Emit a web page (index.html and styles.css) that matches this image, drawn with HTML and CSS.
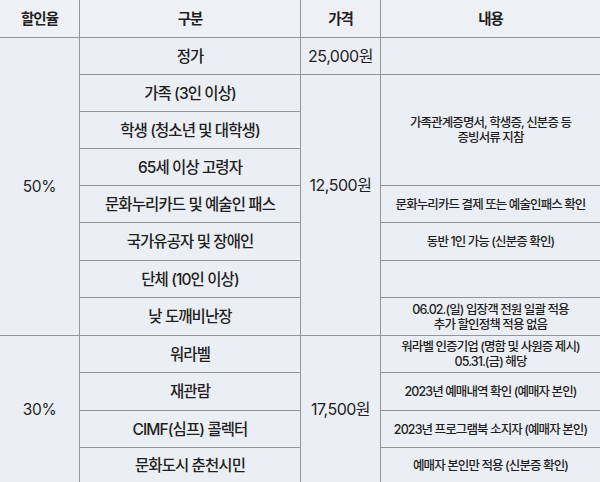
FILE: index.html
```html
<!DOCTYPE html>
<html lang="ko">
<head>
<meta charset="utf-8">
<link rel="stylesheet" href="styles.css">
</head>
<body>
<div class="table">
  <div class="cell head">할인율</div>
  <div class="cell head">구분</div>
  <div class="cell head">가격</div>
  <div class="cell head last-col">내용</div>

  <div class="cell rate span8">50%</div>
  <div class="cell item">정가</div>
  <div class="cell price">25,000원</div>
  <div class="cell note last-col"></div>

  <div class="cell item">가족 (3인 이상)</div>
  <div class="cell price span7 lift">12,500원</div>
  <div class="cell note last-col span3">가족관계증명서, 학생증, 신분증 등<br>증빙서류 지참</div>

  <div class="cell item">학생 (청소년 및 대학생)</div>
  <div class="cell item">65세 이상 고령자</div>

  <div class="cell item">문화누리카드 및 예술인 패스</div>
  <div class="cell note last-col">문화누리카드 결제 또는 예술인패스 확인</div>

  <div class="cell item">국가유공자 및 장애인</div>
  <div class="cell note last-col">동반 1인 가능 (신분증 확인)</div>

  <div class="cell item">단체 (10인 이상)</div>
  <div class="cell note last-col"></div>

  <div class="cell item">낮 도깨비난장</div>
  <div class="cell note last-col">06.02.(일) 입장객 전원 일괄 적용<br>추가 할인정책 적용 없음</div>

  <div class="cell rate span4 last-row">30%</div>
  <div class="cell item">워라벨</div>
  <div class="cell price span4 last-row">17,500원</div>
  <div class="cell note last-col">워라벨 인증기업 (명함 및 사원증 제시)<br>05.31.(금) 해당</div>

  <div class="cell item">재관람</div>
  <div class="cell note last-col">2023년 예매내역 확인 (예매자 본인)</div>

  <div class="cell item">CIMF(심프) 콜렉터</div>
  <div class="cell note last-col">2023년 프로그램북 소지자 (예매자 본인)</div>

  <div class="cell item last-row">문화도시 춘천시민</div>
  <div class="cell note last-col last-row">예매자 본인만 적용 (신분증 확인)</div>
</div>
</body>
</html>
```

FILE: styles.css
```css
html, body {
  margin: 0;
  padding: 0;
  background: #eceef5;
}

body {
  width: 600px;
  height: 482px;
  overflow: hidden;
  font-family: Inter, "Noto Sans CJK KR", sans-serif;
  color: #1f1f22;
}

.table {
  display: grid;
  grid-template-columns: 80px 221px 80px 219px;
  grid-template-rows: 38px 37px 37px 37px 37px 37px 38px 37px 38px 37px 38px 37px 34px;
  background: #eceef5;
}

.cell {
  box-sizing: border-box;
  display: flex;
  align-items: center;
  justify-content: center;
  text-align: center;
  border-right: 1px solid #95959c;
  border-bottom: 1px solid #95959c;
  font-size: 15.5px;
  font-weight: 500;
  letter-spacing: -0.9px;
  line-height: 15px;
}

.head {
  font-weight: 700;
  font-size: 14.5px;
  letter-spacing: -1px;
  background: #eff0f6;
}

.note {
  font-size: 12.5px;
  letter-spacing: -0.9px;
  line-height: 15px;
}

.rate {
  font-size: 15.5px;
  font-weight: 400;
  letter-spacing: -0.3px;
}

.price {
  font-size: 16px;
  font-weight: 400;
  letter-spacing: -0.5px;
}

.lift {
  padding-bottom: 40px;
}

.last-col {
  border-right: none;
}

.last-row {
  border-bottom: none;
}

.span3 { grid-row: span 3; }
.span4 { grid-row: span 4; }
.span7 { grid-row: span 7; }
.span8 { grid-row: span 8; }
```
